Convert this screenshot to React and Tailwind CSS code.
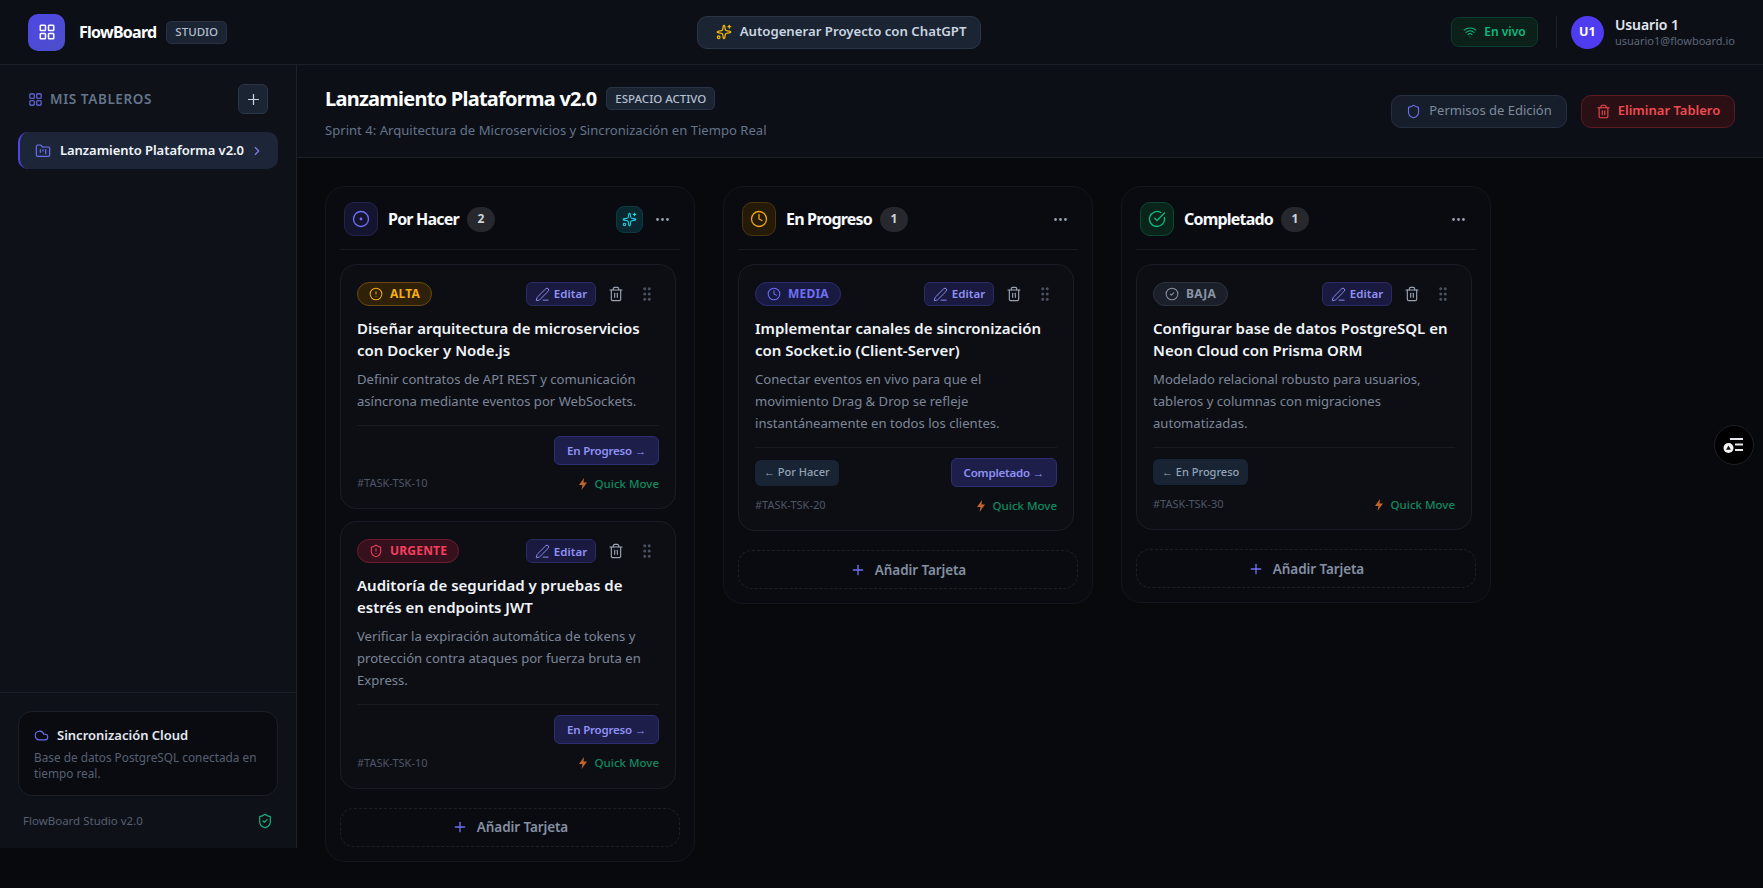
import {
  LayoutGrid,
  Plus,
  FolderKanban,
  ChevronRight,
  Sparkles,
  Wifi,
  Shield,
  Trash2,
  CircleDot,
  Clock,
  CircleCheckBig,
  CircleCheck,
  Ellipsis,
  PenLine,
  CircleAlert,
  ShieldAlert,
  GripVertical,
  Cloud,
  ShieldCheck,
} from 'lucide-react';

const badgeStyles = {
  ALTA: { cls: 'border-[#6b4a10] bg-[#2e2009] text-[#f5ae0f]', icon: CircleAlert },
  URGENTE: { cls: 'border-[#6e1a30] bg-[#36101c] text-[#f43f5e]', icon: ShieldAlert },
  MEDIA: { cls: 'border-[#2c2c70] bg-[#191a42] text-[#6d70f5]', icon: Clock },
  BAJA: { cls: 'border-[#2c3340] bg-[#1b1f29] text-[#8a94a6]', icon: CircleCheck },
};

const columns = [
  {
    name: 'Por Hacer',
    count: 2,
    icon: CircleDot,
    iconCls: 'border-[#23234f] bg-[#14142e] text-[#6d70f5]',
    ai: true,
    cards: [
      {
        priority: 'ALTA',
        title: 'Diseñar arquitectura de microservicios con Docker y Node.js',
        desc: 'Definir contratos de API REST y comunicación asíncrona mediante eventos por WebSockets.',
        next: 'En Progreso →',
        id: '#TASK-TSK-10',
      },
      {
        priority: 'URGENTE',
        title: 'Auditoría de seguridad y pruebas de estrés en endpoints JWT',
        desc: 'Verificar la expiración automática de tokens y protección contra ataques por fuerza bruta en Express.',
        next: 'En Progreso →',
        id: '#TASK-TSK-10',
      },
    ],
  },
  {
    name: 'En Progreso',
    count: 1,
    icon: Clock,
    iconCls: 'border-[#4a3510] bg-[#251a08] text-[#eda70f]',
    cards: [
      {
        priority: 'MEDIA',
        title: 'Implementar canales de sincronización con Socket.io (Client-Server)',
        desc: 'Conectar eventos en vivo para que el movimiento Drag & Drop se refleje instantáneamente en todos los clientes.',
        prev: '← Por Hacer',
        next: 'Completado →',
        id: '#TASK-TSK-20',
      },
    ],
  },
  {
    name: 'Completado',
    count: 1,
    icon: CircleCheckBig,
    iconCls: 'border-[#0f4633] bg-[#08241b] text-[#10b981]',
    cards: [
      {
        priority: 'BAJA',
        title: 'Configurar base de datos PostgreSQL en Neon Cloud con Prisma ORM',
        desc: 'Modelado relacional robusto para usuarios, tableros y columnas con migraciones automatizadas.',
        prev: '← En Progreso',
        id: '#TASK-TSK-30',
      },
    ],
  },
];

function TaskCard({ card }) {
  const badge = badgeStyles[card.priority];
  const BadgeIcon = badge.icon;
  return (
    <div className="w-[336px] rounded-[16px] border border-[#191c26] bg-[#0d0e14] pt-[17px] pr-[16px] pb-[16px] pl-[16px]">
      <div className="flex h-6 items-center justify-between">
        <span className={`flex h-6 items-center gap-[7px] rounded-full border px-[11px] text-[12px] font-bold tracking-[0.2px] ${badge.cls}`}>
          <BadgeIcon className="h-[14px] w-[14px]" strokeWidth={1.75} />
          {card.priority}
        </span>
        <div className="flex items-center">
          <button className="flex h-6 w-[70px] items-center justify-center gap-1 rounded-md border border-[#2a2a63] bg-[#1a1a40] text-[11.5px] font-semibold text-[#8f92f5]">
            <PenLine className="h-[15px] w-[15px]" strokeWidth={1.5} />
            Editar
          </button>
          <Trash2 className="ml-[12px] h-[16px] w-[16px] text-[#98a2b3]" strokeWidth={1.75} />
          <GripVertical className="ml-[14px] mr-[3px] h-[18px] w-[18px] text-[#4a5160]" strokeWidth={2} />
        </div>
      </div>
      <h3 className="mt-[11px] text-[15px] leading-[22px] font-semibold text-[#f1f5f9]">{card.title}</h3>
      <p className="mt-[7px] text-[13.1px] leading-[22px] text-[#7c8698]">{card.desc}</p>
      <div className="mt-[13px] border-t border-[#171a22] pt-[10px]">
        <div className="flex min-h-[28px] items-center justify-between">
          {card.prev ? (
            <button className="flex h-[26px] items-center rounded-md bg-[#182433] px-[9px] text-[11px] font-medium text-[#94a3b8]">
              {card.prev}
            </button>
          ) : (
            <span />
          )}
          {card.next && (
            <button className="flex h-[29px] items-center rounded-md border border-[#2e2e72] bg-[#1e1e4a] px-[12px] text-[11.5px] font-semibold tracking-[-0.2px] text-[#8f92f5]">
              {card.next}
            </button>
          )}
        </div>
        <div className="mt-[10px] flex items-center justify-between">
          <span className="text-[11px] text-[#4d5666]">{card.id}</span>
          <span className="flex items-center text-[11.5px] font-medium text-[#0f8a5f]">
            <svg width="8" height="12" viewBox="0 0 8 12" fill="#c2652a">
              <polygon points="5,0 0,7 3.5,7 2.5,12 8,4.5 4.5,4.5" />
            </svg>
            <span className="ml-[8px]">Quick Move</span>
          </span>
        </div>
      </div>
    </div>
  );
}

function Column({ col }) {
  const Icon = col.icon;
  return (
    <div className="w-[370px] shrink-0 self-start rounded-[20px] border border-[#14161f] bg-[#0a0b10] px-[14px] pt-[15px] pb-[14px]">
      <div className="flex h-[48px] items-start justify-between border-b border-[#171a22] px-[4px]">
        <div className="flex items-center">
          <div className={`flex h-[34px] w-[34px] items-center justify-center rounded-[10px] border ${col.iconCls}`}>
            <Icon className="h-[18px] w-[18px]" strokeWidth={1.75} />
          </div>
          <span className="ml-[10px] text-[16px] font-bold tracking-[-0.8px] text-[#f8fafc]">{col.name}</span>
          <span className="ml-2 flex h-[25px] w-[28px] items-center justify-center rounded-full bg-[#26282e] text-[12px] font-bold text-[#d1d5db]">
            {col.count}
          </span>
        </div>
        <div className="flex h-[34px] items-center">
          {col.ai && (
            <span className="flex h-[27px] w-[27px] items-center justify-center rounded-lg border border-[#0e3a44] bg-[#0a2830] text-[#22d3ee]">
              <Sparkles className="h-[15px] w-[15px]" strokeWidth={1.75} />
            </span>
          )}
          <Ellipsis className="ml-[11px] mr-[5px] h-[17px] w-[17px] text-[#98a2b3]" />
        </div>
      </div>
      <div className="mt-[14px] flex flex-col gap-3">
        {col.cards.map((card) => (
          <TaskCard key={card.title} card={card} />
        ))}
      </div>
      <button className="mt-[19px] flex h-[39px] w-full items-center justify-center gap-[9px] rounded-[14px] border border-dashed border-[#1d202b] text-[13.5px] font-semibold tracking-[-0.1px] text-[#8490a3]">
        <Plus className="h-[16px] w-[16px] text-[#6d70f5]" />
        Añadir Tarjeta
      </button>
    </div>
  );
}

export default function App() {
  return (
    <div className="min-h-screen bg-[#08090d] font-['Noto_Sans',sans-serif] text-[14px]">
      <header className="flex h-[65px] items-center justify-between border-b border-[#1c2029] bg-[#0c0f16] px-7">
        <div className="flex items-center">
          <div className="flex h-[37px] w-[37px] items-center justify-center rounded-[10px] bg-gradient-to-br from-[#4f46e5] to-[#4b4fc9] text-white">
            <LayoutGrid className="h-[18px] w-[18px]" strokeWidth={2} />
          </div>
          <span className="ml-[14px] text-[16px] font-bold tracking-[-0.75px] text-white">FlowBoard</span>
          <span className="ml-[10px] flex h-[23px] items-center rounded-[5px] border border-[#283244] bg-[#1a2433] px-[8px] text-[11.5px] font-medium text-[#b4bfcf]">
            STUDIO
          </span>
        </div>
        <button className="flex h-[33px] w-[284px] items-center justify-center gap-[8px] rounded-[10px] border border-[#2a3547] bg-[#1a2433] pl-[4px] text-[13.2px] font-semibold text-[#cbd5e1]">
          <Sparkles className="h-[16px] w-[16px] text-[#eab308]" strokeWidth={2} />
          Autogenerar Proyecto con ChatGPT
        </button>
        <div className="flex items-center">
          <span className="flex h-[30px] w-[87px] items-center justify-center gap-[7px] rounded-lg border border-[#0d3b2c] bg-[#0a2019] text-[12px] font-semibold text-[#10b981]">
            <Wifi className="h-[14px] w-[14px]" strokeWidth={1.75} />
            En vivo
          </span>
          <span className="ml-[18px] h-8 w-px bg-[#1c2029]" />
          <span className="ml-[14px] flex h-[33px] w-[33px] items-center justify-center rounded-full bg-[#4f3cf0] text-[12.5px] font-bold text-white">
            U1
          </span>
          <div className="ml-[11px] flex flex-col">
            <span className="text-[14px] leading-[16px] font-semibold tracking-[-0.1px] text-[#e2e8f0]">Usuario 1</span>
            <span className="text-[11px] leading-[15px] text-[#5d6778]">usuario1@flowboard.io</span>
          </div>
        </div>
      </header>

      <div className="flex">
        <aside className="flex h-[783px] w-[297px] shrink-0 flex-col border-r border-[#1c2029] bg-[#0e1118]">
          <div className="flex-1 px-[18px] pt-[19px]">
            <div className="flex h-[30px] items-center justify-between pl-[10px] pr-[10px]">
              <div className="flex items-center gap-[7px] text-[13.5px] font-semibold tracking-[0.6px] text-[#64748b]">
                <LayoutGrid className="h-[15px] w-[15px] text-[#6d70f5]" strokeWidth={1.75} />
                MIS TABLEROS
              </div>
              <button className="flex h-[30px] w-[30px] items-center justify-center rounded-md border border-[#2a3547] bg-[#1a2433] text-[#cbd5e1]">
                <Plus className="h-[17px] w-[17px]" strokeWidth={1.75} />
              </button>
            </div>
            <div className="mt-[18px] flex h-[37px] items-center rounded-[10px] border-l-2 border-[#4f46e5] bg-[#1c2638] pl-[15px] text-[13px] font-semibold tracking-[-0.05px] text-[#f1f5f9]">
              <FolderKanban className="h-[16px] w-[16px] text-[#6d70f5]" strokeWidth={1.75} />
              <span className="ml-[9px]">Lanzamiento Plataforma v2.0</span>
              <ChevronRight className="ml-[6px] h-[14px] w-[14px] text-[#7f82e8]" />
            </div>
          </div>
          <div className="h-[156px] border-t border-[#1c2029] px-[18px] pt-[18px]">
            <div className="h-[85px] rounded-[14px] border border-[#1c2029] bg-[#0a0b10] px-[15px] pt-[14px]">
              <div className="flex items-center gap-[8px] text-[13px] font-semibold text-[#e2e8f0]">
                <Cloud className="h-[15px] w-[15px] text-[#6d70f5]" strokeWidth={1.75} />
                Sincronización Cloud
              </div>
              <p className="mt-[3px] text-[11.8px] leading-[16px] text-[#566072]">
                Base de datos PostgreSQL conectada en tiempo real.
              </p>
            </div>
            <div className="mt-[16px] flex items-center justify-between px-[5px] text-[11.5px] text-[#566072]">
              FlowBoard Studio v2.0
              <ShieldCheck className="h-[16px] w-[16px] text-[#10b981]" strokeWidth={1.75} />
            </div>
          </div>
        </aside>

        <main className="min-w-0 flex-1">
          <div className="flex h-[93px] items-center justify-between border-b border-[#1c2029] bg-[#0c0f16] px-7">
            <div className="pt-[2px]">
              <div className="flex items-center">
                <h1 className="text-[20px] font-bold tracking-[-0.75px] text-white">Lanzamiento Plataforma v2.0</h1>
                <span className="ml-[10px] flex h-[23px] items-center rounded-[5px] border border-[#283244] bg-[#1a2433] px-[8px] text-[11.5px] font-medium text-[#b4bfcf]">
                  ESPACIO ACTIVO
                </span>
              </div>
              <p className="mt-[7px] text-[13.1px] text-[#64748b]">
                Sprint 4: Arquitectura de Microservicios y Sincronización en Tiempo Real
              </p>
            </div>
            <div className="flex items-center gap-[14px]">
              <button className="flex h-[33px] w-[176px] items-center justify-center gap-[8px] rounded-[10px] border border-[#252f40] bg-[#161e2b] text-[13px] text-[#7f8a9c]">
                <Shield className="h-[15px] w-[15px] text-[#6d70f5]" strokeWidth={1.75} />
                Permisos de Edición
              </button>
              <button className="flex h-[33px] w-[154px] items-center justify-center gap-[7px] rounded-[10px] border border-[#5c1a22] bg-[#2a0f14] text-[13px] font-semibold text-[#f04b50]">
                <Trash2 className="h-[15px] w-[15px]" strokeWidth={1.75} />
                Eliminar Tablero
              </button>
            </div>
          </div>
          <div className="flex items-start gap-7 pt-[28px] pl-7">
            {columns.map((col) => (
              <Column key={col.name} col={col} />
            ))}
          </div>
        </main>
      </div>

      <button className="fixed top-[425px] left-[1714px] flex h-10 w-10 items-center justify-center rounded-full border border-[#1f2126] bg-black">
        <svg width="22" height="18" viewBox="0 0 22 18" fill="none">
          <path d="M7 3h13M12 8.5h8M12 14h8" stroke="#e5e7eb" strokeWidth="1.8" />
          <circle cx="5.5" cy="12" r="5" fill="#f5f5f5" />
          <path d="M5.5 9.5l2.4 4.2H3.1z" fill="#111" />
        </svg>
      </button>
    </div>
  );
}
